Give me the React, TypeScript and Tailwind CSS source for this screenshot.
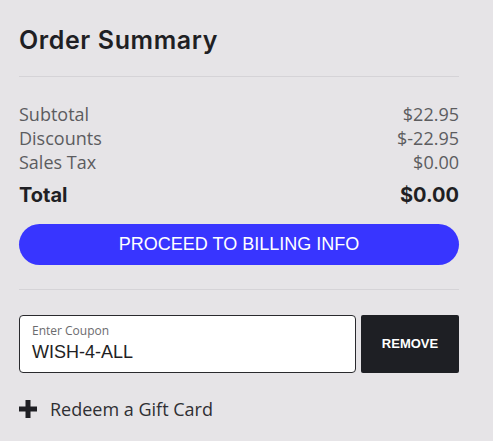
import React from "react";

export default function App() {
  return (
    <div className="w-[493px] h-[441px] bg-[#e6e4e7] overflow-hidden">
      <div className="w-[440px] ml-[19px] pt-[22px] flex flex-col">
        <h1 className="text-[25px] leading-[36px] font-semibold text-[#1f1f24] [font-family:Inter,sans-serif] tracking-[0.6px]">
          Order Summary
        </h1>
        <div className="mt-[18px] h-px bg-[#d5d3d7]" />
        <div className="mt-[25px] flex flex-col text-[18px] leading-[24px] text-[#5c5c5f] [font-family:'Open_Sans',sans-serif]">
          <div className="flex justify-between">
            <span>Subtotal</span>
            <span>$22.95</span>
          </div>
          <div className="flex justify-between">
            <span>Discounts</span>
            <span>$-22.95</span>
          </div>
          <div className="flex justify-between">
            <span>Sales Tax</span>
            <span>$0.00</span>
          </div>
        </div>
        <div className="mt-[8px] flex justify-between text-[20px] leading-[26px] font-bold text-[#1f1f24] [font-family:Inter,sans-serif]">
          <span>Total</span>
          <span>$0.00</span>
        </div>
        <button className="mt-[16px] h-[41px] w-full rounded-full bg-[#3835ff] text-white text-[18px] [font-family:'Liberation_Sans',Arial,sans-serif]">
          PROCEED TO BILLING INFO
        </button>
        <div className="mt-[24px] h-px bg-[#d5d3d7]" />
        <div className="mt-[25px] flex gap-[5px] h-[58px]">
          <div className="flex-1 bg-white border border-[#2a2a2e] rounded-[4px] pl-[12px] pt-[7px] flex flex-col">
            <span className="text-[12px] leading-[16px] text-[#6b6b6e] [font-family:'Open_Sans',sans-serif]">
              Enter Coupon
            </span>
            <span className="mt-[1px] text-[18px] leading-[24px] text-[#1f1f24] [font-family:'Liberation_Sans',Arial,sans-serif]">
              WISH-4-ALL
            </span>
          </div>
          <button className="w-[98px] bg-[#1e1f24] rounded-[2px] text-white text-[13px] font-semibold [font-family:'Liberation_Sans',Arial,sans-serif]">
            REMOVE
          </button>
        </div>
        <div className="mt-[24px] flex items-center gap-[13px]">
          <svg width="18" height="18" viewBox="0 0 18 18">
            <rect x="6.5" y="0" width="5" height="18" fill="#1f1f24" />
            <rect x="0" y="6.5" width="18" height="5" fill="#1f1f24" />
          </svg>
          <span className="text-[18px] leading-[24px] text-[#2f2f33] [font-family:'Open_Sans',sans-serif]">
            Redeem a Gift Card
          </span>
        </div>
      </div>
    </div>
  );
}
